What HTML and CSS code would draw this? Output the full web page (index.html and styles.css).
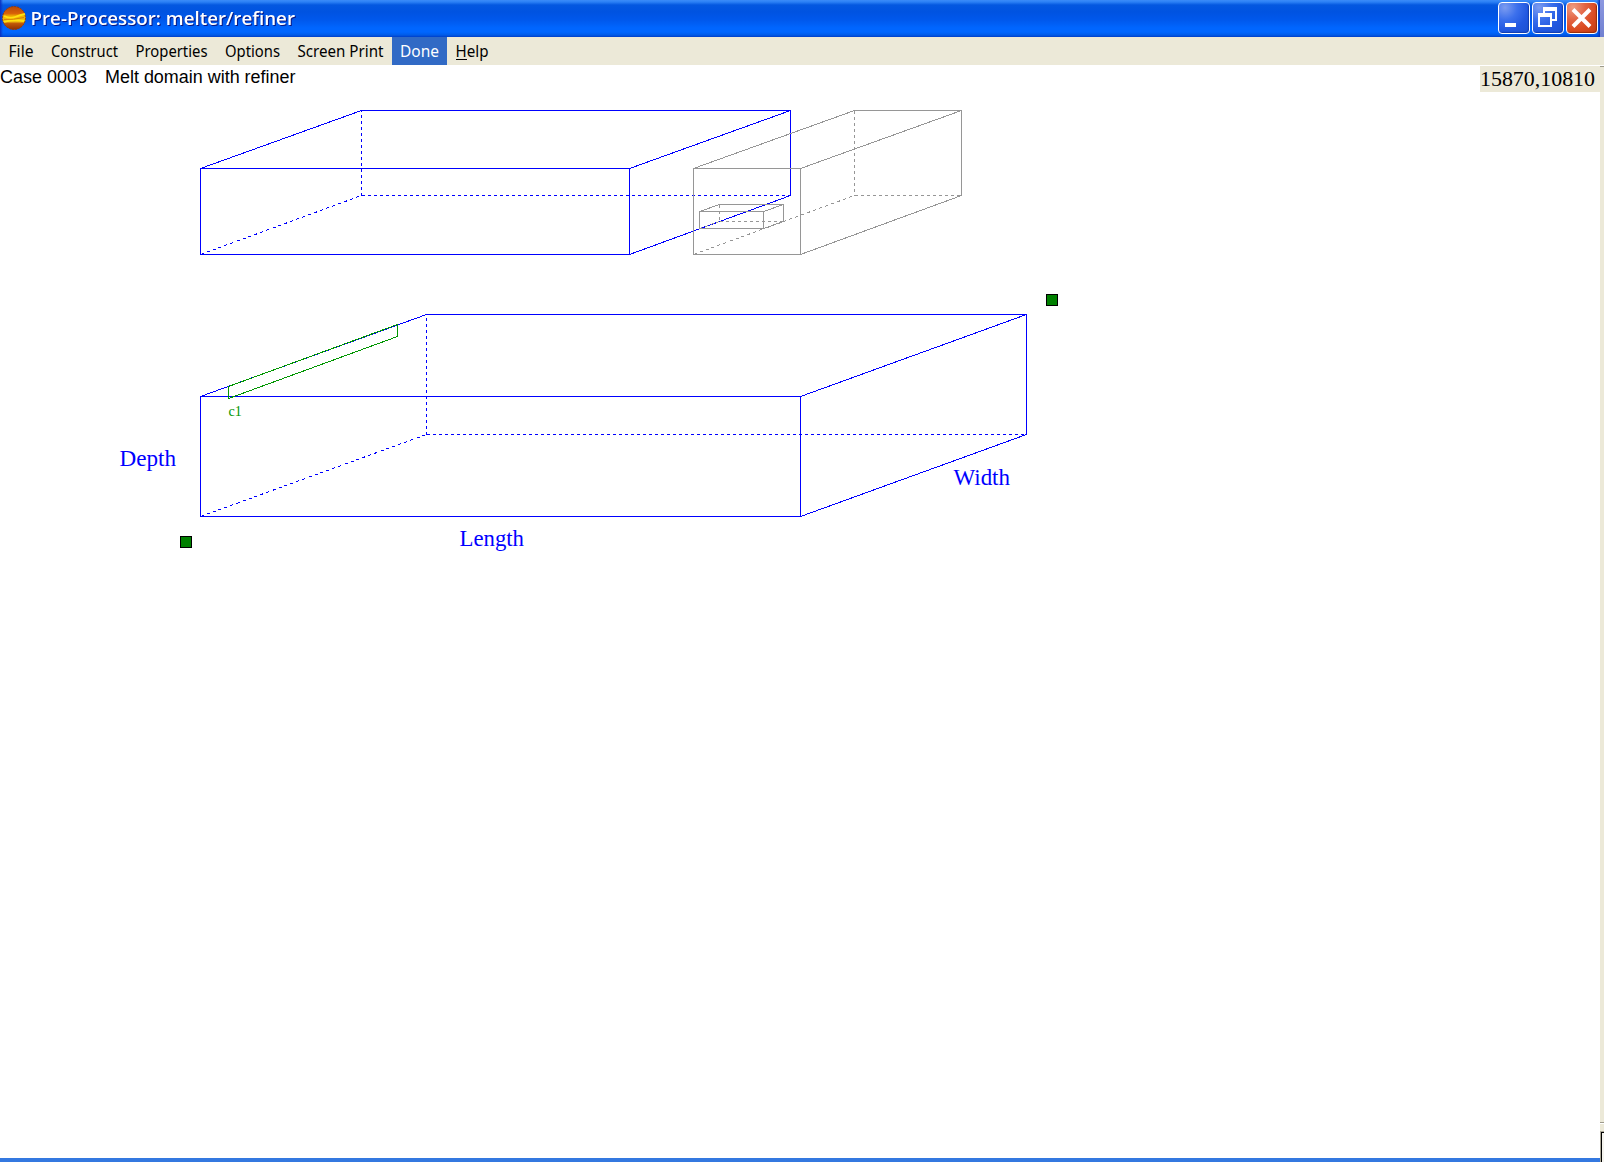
FILE: index.html
```html
<!DOCTYPE html>
<html lang="en">
<head>
<meta charset="utf-8">
<title>Pre-Processor: melter/refiner</title>
<link rel="stylesheet" href="styles.css">
</head>
<body>
<div class="window">
  <header class="titlebar">
    <svg class="app-icon" width="26" height="26" viewBox="0 0 26 26">
      <defs>
        <linearGradient id="globe" x1="0" y1="0" x2="0" y2="1">
          <stop offset="0" stop-color="#b84808"/><stop offset=".3" stop-color="#d86008"/>
          <stop offset=".42" stop-color="#f0b000"/><stop offset=".65" stop-color="#f0c010"/>
          <stop offset=".74" stop-color="#c05808"/><stop offset="1" stop-color="#903000"/>
        </linearGradient>
      </defs>
      <circle cx="13" cy="13" r="11.5" fill="url(#globe)" stroke="#8c3c10" stroke-dasharray="2 1"/>
      <path d="M3 11Q9 14 14 12T24 9M3 17Q11 14 23 16" fill="none" stroke="#ffe010" stroke-width="1.800"/>
      <path d="M3 14.5Q12 15 23 12.500" fill="none" stroke="#d88008"/>
    </svg>
    <svg class="title" width="300" height="37"><text x="1.500" y="25" textLength="264.500" lengthAdjust="spacingAndGlyphs">Pre-Processor: melter/refiner</text></svg>
    <div class="controls">
      <svg class="control" width="32" height="32"><path d="M6 20h11v4H6z" fill="#fff"/></svg>
      <svg class="control" width="32" height="32"><path d="M10 4h14v14h-5v-2h3V8H12v2h-2zM5 10h14v14H5zM7 14v8h10v-8z" fill="#fff" fill-rule="evenodd"/></svg>
      <svg class="control close" width="32" height="32"><path d="M6 6.500L23 23.500M23 6.500L6 23.500" stroke="#fff" stroke-width="4"/></svg>
    </div>
  </header>
  <nav class="menubar">
    <svg width="42" height="28"><text x="8.500" y="20" textLength="25" lengthAdjust="spacingAndGlyphs">File</text></svg>
    <svg width="85" height="28"><text x="9" y="20" textLength="67" lengthAdjust="spacingAndGlyphs">Construct</text></svg>
    <svg width="89" height="28"><text x="8.500" y="20" textLength="72" lengthAdjust="spacingAndGlyphs">Properties</text></svg>
    <svg width="73" height="28"><text x="9" y="20" textLength="55" lengthAdjust="spacingAndGlyphs">Options</text></svg>
    <svg width="103" height="28"><text x="8.500" y="20" textLength="86" lengthAdjust="spacingAndGlyphs">Screen Print</text></svg>
    <svg class="active" width="55" height="28"><text x="8" y="20" textLength="39" lengthAdjust="spacingAndGlyphs">Done</text></svg>
    <svg width="50" height="28"><text x="8.500" y="20" textLength="33" lengthAdjust="spacingAndGlyphs">Help</text><path d="M9 22.5h11" stroke="#000"/></svg>
  </nav>
  <main class="workspace">
    <svg class="drawing" width="1600" height="1093" viewBox="0 65 1600 1093">
      <g class="case">
        <text x="0" y="83" textLength="87" lengthAdjust="spacingAndGlyphs">Case 0003</text>
        <text x="105" y="83" textLength="190.500" lengthAdjust="spacingAndGlyphs">Melt domain with refiner</text>
      </g>
      <g class="lines" transform="translate(.5 .5)">
        <g class="blue">
          <path d="M200 168H629V254H200ZM200 168L361 110H790V195L629 254M629 168L790 110"/>
          <path class="hidden" d="M361 195V110M361 195H790"/>
          <path class="hidden sloped" d="M200 254L361 195"/>
        </g>
        <g class="gray">
          <path d="M693 168H800V254H693ZM693 168L854 110H961V195L800 254M800 168L961 110"/>
          <path class="hidden" d="M854 110V195M854 195H961"/>
          <path class="hidden sloped" d="M693 254L854 195"/>
          <path d="M699 211H763V228H699ZM699 211L719 204H783V221L763 228M763 211L783 204"/>
          <path class="hidden" d="M719 204V221M719 221H783M699 228L719 221"/>
        </g>
        <g class="blue">
          <path d="M200 396H800V516H200ZM200 396L426 314H1026V434L800 516M800 396L1026 314"/>
          <path class="hidden" d="M426 434V314M426 434H1026"/>
          <path class="hidden sloped" d="M200 516L426 434"/>
        </g>
        <path class="green" d="M228 386L397 324V336L228 398Z"/>
        <path class="handle" d="M180 536h11v11h-11zM1046 294h11v11h-11z"/>
      </g>
      <g class="labels">
        <text x="119.500" y="466" textLength="56.500" lengthAdjust="spacingAndGlyphs">Depth</text>
        <text x="459.500" y="546" textLength="64.500" lengthAdjust="spacingAndGlyphs">Length</text>
        <text x="953.500" y="485" textLength="56.500" lengthAdjust="spacingAndGlyphs">Width</text>
        <text class="small" x="228.500" y="416">c1</text>
      </g>
      <g class="coords">
        <path d="M1480 66h120v26h-120z" fill="#ece9d8"/>
        <text x="1480" y="86" textLength="115" lengthAdjust="spacingAndGlyphs">15870,10810</text>
      </g>
    </svg>
    <svg class="edge" width="4" height="1097" viewBox="0 65 4 1097">
      <path d="M0 65h4v1097H0z" fill="#ece9d8"/>
      <path d="M0 65h4v1H0zM0 1123h4v1H0z" fill="#fff"/>
      <path d="M0 66h4v1H0zM0 1122h4v1H0z" fill="#9d9a8b"/>
      <path d="M0 1131h4v31H0z" fill="#aca899"/>
      <path d="M1 1132h3v30H1z" fill="#000"/>
      <path d="M2 1133h2v29H2z" fill="#f5f4ee"/>
    </svg>
  </main>
</div>
</body>
</html>
```
FILE: styles.css
```css
body { margin: 0; background: #fff; overflow: hidden; }
svg { display: block; flex: none; }
.window { width: 1604px; height: 1162px; display: flex; flex-direction: column; }
.titlebar {
  height: 37px; display: flex; box-sizing: border-box; padding-right: 6px;
  background:
    linear-gradient(90deg, #0a2fc0 0, transparent 3px),
    linear-gradient(#8c98e0, #7080d0) right / 4px 100% no-repeat,
    linear-gradient(90deg, transparent calc(100% - 7px), #0830b8 calc(100% - 4px)),
    linear-gradient(#3c8cf8 0, #2b80f5 2px, #0458e0 5px, #0053e1 12px, #0058ec 20px, #0066ff 28px, #0066ff 32px, #005be8 35px, #003dc8 37px);
}
.app-icon { margin: 5px 2px 0 1px; }
.title { font: 600 18px "Open Sans", "Noto Sans", sans-serif; }
.title text { fill: #fff; filter: drop-shadow(1px 1px 0 #0a1883); }
.controls { display: flex; gap: 2px; margin: 2px 0 0 auto; }
.control {
  box-sizing: border-box; border: 1px solid #fff; border-radius: 4px;
  background: radial-gradient(circle at 20% 15%, #7c9cf0 0, #3c70ec 35%, #2258e0 65%, #1c50d0 100%);
  box-shadow: inset -1px -1px 1px #123cb0;
}
.control.close {
  background: radial-gradient(circle at 20% 15%, #f09c80 0, #e26444 35%, #da4a20 65%, #c03c14 100%);
  box-shadow: inset -1px -1px 1px #982c08;
}
.menubar { height: 28px; display: flex; background: #ece9d8; font: 16.5px "Noto Sans", sans-serif; }
.active { background: #316ac5; }
.active text { fill: #fff; }
.workspace { height: 1097px; display: flex; }
.drawing { border-bottom: 4px solid #3078e8; border-image: linear-gradient(#3070d0, #4088ee 40%, #3478e0) 4; }
.case { font: 17.5px "Liberation Sans", Arial, sans-serif; }
.lines { fill: none; stroke-width: 1; shape-rendering: crispEdges; }
.blue { stroke: #00f; }
.gray { stroke: #969696; }
.green { stroke: #009600; }
.hidden { stroke-dasharray: 3 3; }
.sloped { stroke-dasharray: 3.19 3.19; }
.handle { fill: #008000; stroke: #000; }
.labels, .coords { font: 22.67px "Liberation Serif", "Times New Roman", serif; }
.labels { fill: #00f; }
.labels .small { font-size: 14px; fill: #009600; }
.coords { font-size: 22px; }
```
